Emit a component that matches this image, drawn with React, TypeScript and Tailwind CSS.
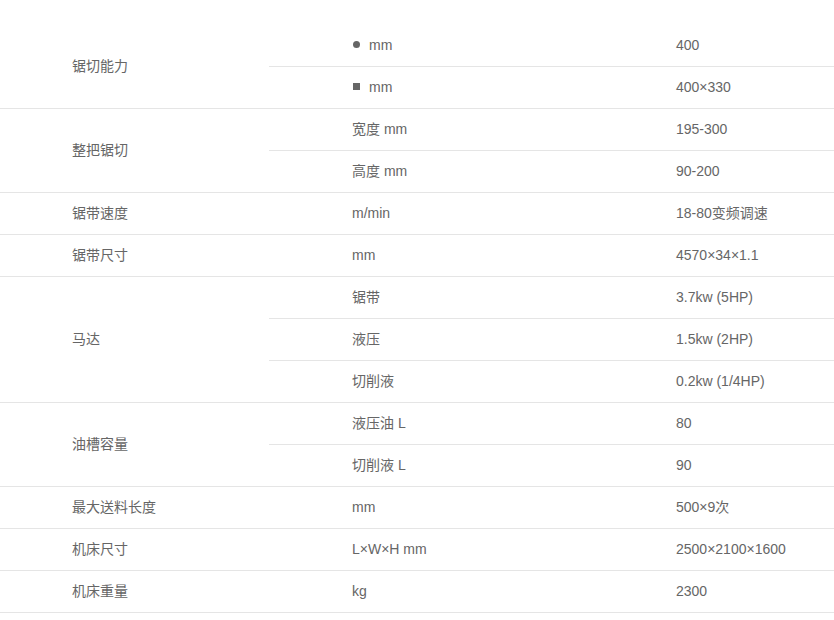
import React from "react";

type Sub = { b?: React.ReactNode; c: string };
type Row = { a: string; subs: Sub[] };

const Dot = () => (
  <span className="inline-block w-[7px] h-[7px] rounded-full bg-[#666] mr-[9px] ml-[1px] align-middle relative -top-[1px]" />
);
const Sq = () => (
  <span className="inline-block w-[7px] h-[7px] bg-[#666] mr-[9px] ml-[1px] align-middle relative -top-[1px]" />
);

const rows: Row[] = [
  {
    a: "锯切能力",
    subs: [
      { b: <><Dot />mm</>, c: "400" },
      { b: <><Sq />mm</>, c: "400×330" },
    ],
  },
  {
    a: "整把锯切",
    subs: [
      { b: "宽度 mm", c: "195-300" },
      { b: "高度 mm", c: "90-200" },
    ],
  },
  { a: "锯带速度", subs: [{ b: "m/min", c: "18-80变频调速" }] },
  { a: "锯带尺寸", subs: [{ b: "mm", c: "4570×34×1.1" }] },
  {
    a: "马达",
    subs: [
      { b: "锯带", c: "3.7kw (5HP)" },
      { b: "液压", c: "1.5kw (2HP)" },
      { b: "切削液", c: "0.2kw (1/4HP)" },
    ],
  },
  {
    a: "油槽容量",
    subs: [
      { b: "液压油 L", c: "80" },
      { b: "切削液 L", c: "90" },
    ],
  },
  { a: "最大送料长度", subs: [{ b: "mm", c: "500×9次" }] },
  { a: "机床尺寸", subs: [{ b: "L×W×H mm", c: "2500×2100×1600" }] },
  { a: "机床重量", subs: [{ b: "kg", c: "2300" }] },
];

export default function App() {
  return (
    <div
      className="w-[834px] h-[620px] bg-white pt-[25px] text-[14px] text-[#666]"
      style={{ fontFamily: '"Liberation Sans", Arial, "Noto Sans CJK SC", sans-serif' }}
    >
      {rows.map((r, i) => (
        <div key={i} className="flex border-b border-[#e5e5e5]">
          <div className="w-[269px] pl-[72px] flex items-center">{r.a}</div>
          <div className="flex-1 flex flex-col">
            {r.subs.map((s, j) => (
              <div
                key={j}
                className={
                  "flex h-[41px] items-center" +
                  (j < r.subs.length - 1 ? " border-b border-[#e5e5e5] h-[42px]" : "")
                }
              >
                <div className="w-[324px] pl-[83px] flex items-center">{s.b}</div>
                <div className="flex-1 pl-[83px]">{s.c}</div>
              </div>
            ))}
          </div>
        </div>
      ))}
    </div>
  );
}
